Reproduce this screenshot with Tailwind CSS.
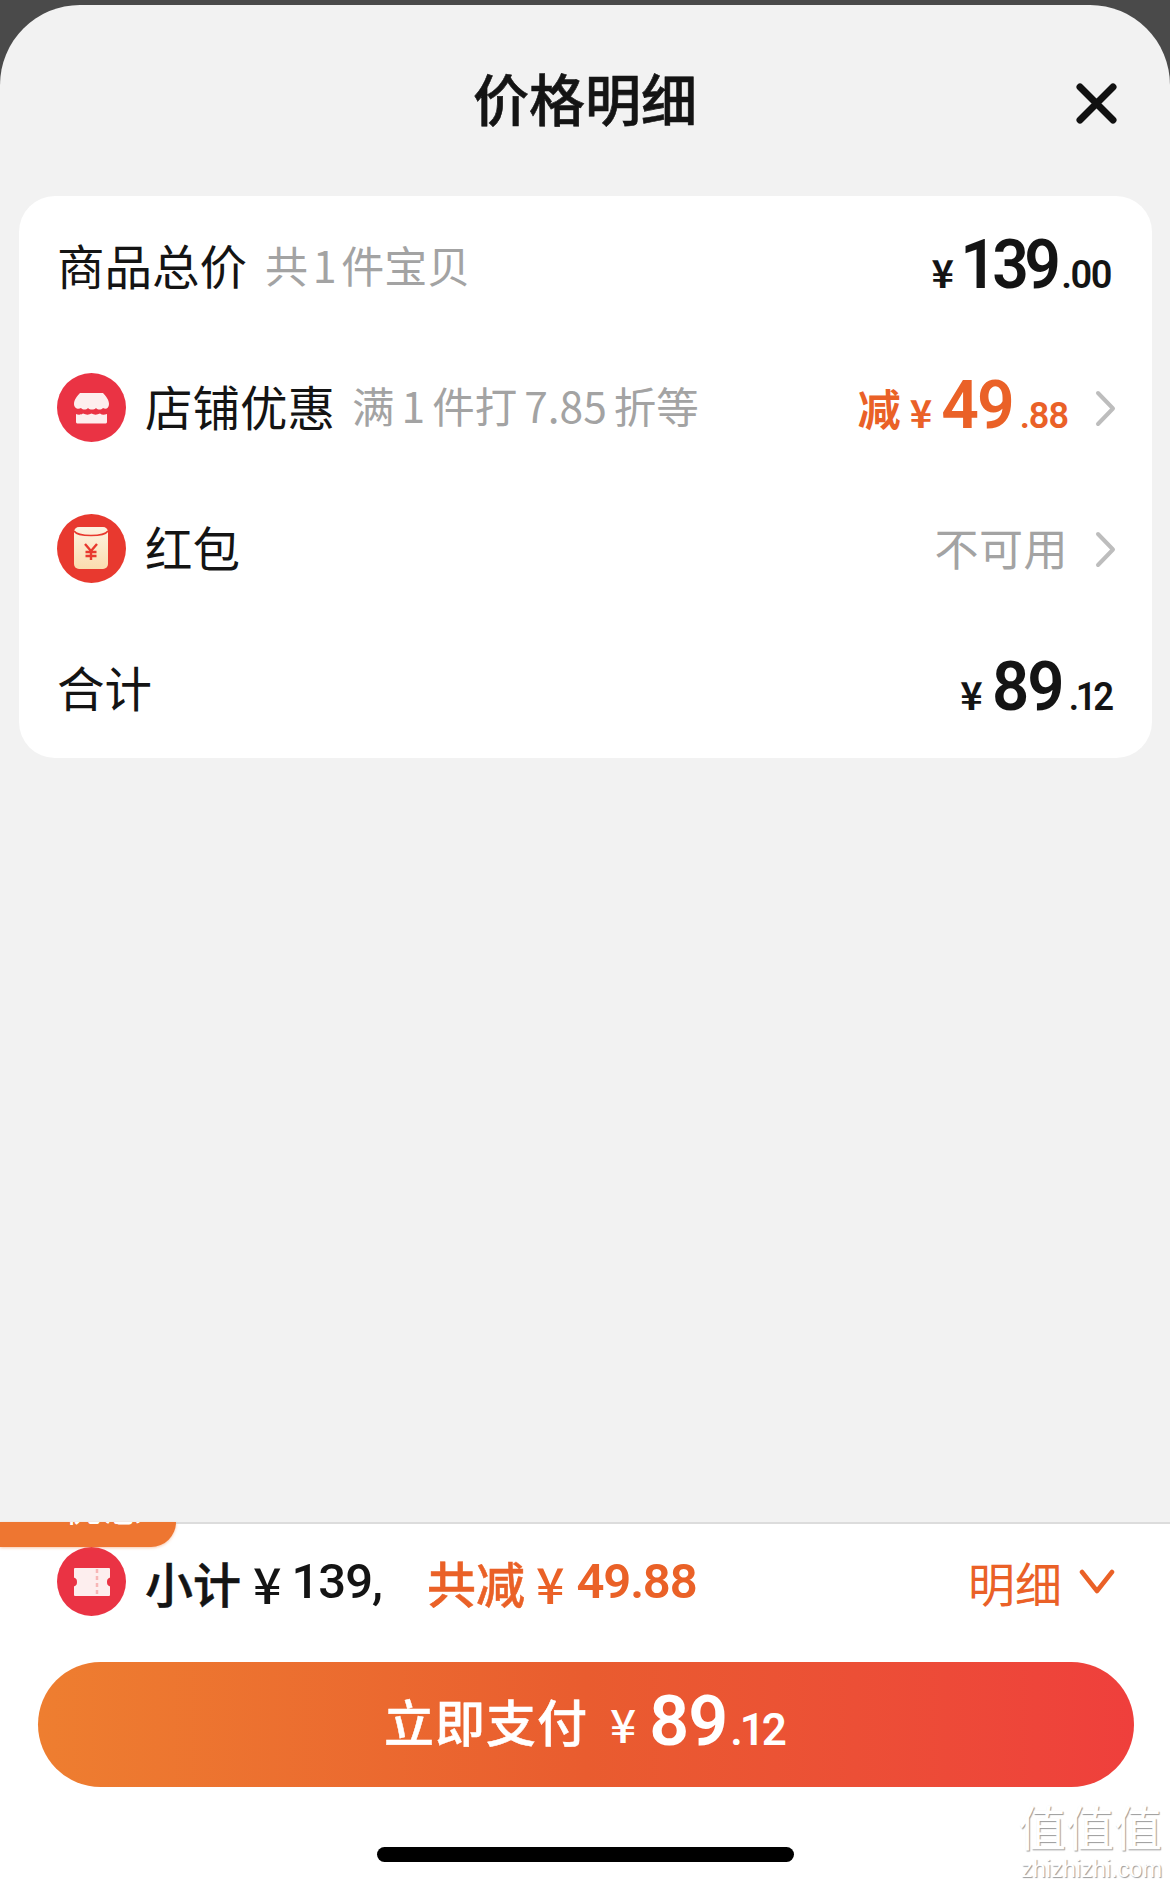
<!doctype html>
<html lang="zh-CN">
  <head>
    <meta charset="UTF-8" />
    <script src="https://cdn.jsdelivr.net/npm/@tailwindcss/browser@4"></script>
    <title>价格明细</title>
  </head>
  <body class="bg-[#4a4a4a] font-['Noto_Sans_CJK_SC','Noto_Sans',sans-serif] text-[#141414]">
    <div class="relative w-[1170px] h-[1886px] pt-[5px] overflow-hidden">
      <div class="h-full flex flex-col bg-[#f2f2f2] rounded-t-[80px]">
        <!-- header -->
        <div class="relative h-[191px] shrink-0 flex justify-center pt-[59px]">
          <h1 class="text-[56px] leading-[66px] font-medium [-webkit-text-stroke:0.6px_#141414]">价格明细</h1>
          <svg class="absolute left-[1076px] top-[78px]" width="41" height="41" viewBox="0 0 41 41" fill="none" stroke="#111" stroke-width="7" stroke-linecap="round">
            <path d="M4 4L37 37M37 4L4 37" />
          </svg>
        </div>

        <!-- price card -->
        <div class="ml-[19px] mr-[18px] bg-white rounded-[36px] h-[562px] shrink-0 flex flex-col pl-[38px] pr-[41px]">
          <div class="h-[141px] flex items-center justify-between">
            <div class="flex items-center -translate-y-[2px]">
              <span class="text-[47.5px] leading-none">商品总价</span>
              <span class="text-[43px] leading-none text-[#a3a3a3] ml-[18px] [word-spacing:-5px]">共 1 件宝贝</span>
            </div>
            <div class="flex items-baseline font-['Roboto',sans-serif] font-semibold">
              <span class="text-[38px] font-['Noto_Sans_CJK_SC'] font-semibold mr-[-1px]">¥</span>
              <span class="text-[69px] leading-none tracking-[-5px] inline-block scale-x-[0.93] origin-right">139</span>
              <span class="text-[38px] ml-[5px] tracking-[-1.5px]">.00</span>
            </div>
          </div>

          <div class="h-[141px] flex items-center justify-between -mr-[5px]">
            <div class="flex items-center">
              <svg width="69" height="69" viewBox="0 0 69 69">
                <circle cx="34.5" cy="34.5" r="34.5" fill="#ea3344" />
                <path d="M23 20H46C49 23 52 27 52 31C52 35 49 37 46 35C44 37 41 37 39 35C37 37 33 37 31 35C29 37 26 37 24 35C21 37 17 35 17 31C17 27 20 23 23 20Z" fill="#fdeeee" />
                <path d="M19 41C21 42 24 42 26 40.5C29 42 32 42 34.5 40.5C37 42 40 42 43 40.5C45 42 47 42 50 41V49C50 50 49 50.5 48 50.5H21C20 50.5 19 50 19 49Z" fill="#fdeeee" />
              </svg>
              <div class="flex items-center -translate-y-[2px]">
                <span class="text-[47.5px] leading-none ml-[19px]">店铺优惠</span>
                <span class="text-[42.5px] leading-none text-[#a3a3a3] ml-[17px] [word-spacing:-2.5px]">满 1 件打 7.85 折等</span>
              </div>
            </div>
            <div class="flex items-center">
              <div class="flex items-baseline text-[#ea6127] font-['Roboto',sans-serif] font-semibold">
                <span class="text-[43px] font-['Noto_Sans_CJK_SC'] font-semibold translate-y-[-2px]">减</span>
                <span class="text-[38px] font-['Noto_Sans_CJK_SC'] font-semibold ml-[9px] mr-[9px]">¥</span>
                <span class="text-[66px] leading-none tracking-[-2px]">49</span>
                <span class="text-[36px] ml-[7px] tracking-[-1px]">.88</span>
              </div>
              <svg class="ml-[27px] mt-[2px]" width="21" height="37" viewBox="0 0 21 37" fill="none" stroke="#bdbdbd" stroke-width="4" stroke-linecap="round" stroke-linejoin="round">
                <path d="M3 3L18 18.5L3 34" />
              </svg>
            </div>
          </div>

          <div class="h-[141px] flex items-center justify-between -mr-[5px]">
            <div class="flex items-center">
              <svg width="69" height="69" viewBox="0 0 69 69">
                <defs>
                  <linearGradient id="pouch" x1="0" y1="0" x2="0" y2="1">
                    <stop offset="0" stop-color="#fdf3e2" />
                    <stop offset="1" stop-color="#fbdcae" />
                  </linearGradient>
                </defs>
                <circle cx="34.5" cy="34.5" r="34.5" fill="#e8392f" />
                <rect x="17" y="13" width="34" height="42" rx="5" fill="url(#pouch)" />
                <path d="M17 17C21 23 47 23 51 17" fill="none" stroke="#e8392f" stroke-width="1.6" />
                <path d="M28 30L34 37L40 30M34 37V46M28.5 38H39.5M28.5 42H39.5" fill="none" stroke="#e8392f" stroke-width="2.4" />
              </svg>
              <span class="text-[47.5px] leading-none ml-[19px] -translate-y-[2px]">红包</span>
            </div>
            <div class="flex items-center">
              <span class="text-[44px] leading-none text-[#a3a3a3] tracking-[0.5px] -translate-y-[2px]">不可用</span>
              <svg class="ml-[27px] mt-[2px]" width="21" height="37" viewBox="0 0 21 37" fill="none" stroke="#bdbdbd" stroke-width="4" stroke-linecap="round" stroke-linejoin="round">
                <path d="M3 3L18 18.5L3 34" />
              </svg>
            </div>
          </div>

          <div class="h-[139px] flex items-center justify-between">
            <span class="text-[47.5px] leading-none -translate-y-[2px]">合计</span>
            <div class="flex items-baseline font-['Roboto',sans-serif] font-semibold translate-y-[1px]">
              <span class="text-[38px] font-['Noto_Sans_CJK_SC'] font-semibold mr-[6px]">¥</span>
              <span class="text-[68px] leading-none tracking-[-2px] inline-block scale-x-[0.96] origin-right">89</span>
              <span class="text-[38px] ml-[5px] tracking-[-3.5px] inline-block scale-x-[0.96] origin-right">.12</span>
            </div>
          </div>
        </div>

        <div class="flex-1"></div>

        <!-- footer -->
        <div class="relative h-[364px] shrink-0 bg-white border-t-2 border-[#dcdcdc] px-[38px]">
          <div class="absolute left-0 -top-[2px] w-[176px] h-[25px] bg-[#ee7631] rounded-br-[28px] shadow-[0_1px_3px_rgba(238,118,49,0.4)] overflow-hidden">
            <span class="absolute left-[64px] -top-[36px] text-[38px] leading-[38px] text-white tracking-[2px]">优惠</span>
          </div>

          <div class="h-[138px] pt-[23px] flex items-start justify-between">
            <div class="flex items-center ml-[19px]">
              <svg width="69" height="69" viewBox="0 0 69 69">
                <circle cx="34.5" cy="34.5" r="34.5" fill="#ea3344" />
                <path d="M18 22H52V30C48 31 48 39 52 40V48H18V40C22 39 22 31 18 30Z" fill="#fdeeee" stroke="#fdeeee" stroke-width="2" stroke-linejoin="round" />
                <path d="M40 22V48" stroke="#f7b6b6" stroke-width="2.5" stroke-dasharray="4 3" />
              </svg>
              <span class="text-[48px] leading-none font-medium ml-[19px] [-webkit-text-stroke:0.5px_#141414]">小计</span>
              <span class="text-[50px] leading-none font-medium ml-[12px]">¥</span>
              <span class="font-['Roboto',sans-serif] font-medium text-[49px] leading-none ml-[10px] tracking-[-1px]">139,</span>
              <span class="text-[49px] leading-none font-medium text-[#ea6127] ml-[45px] [-webkit-text-stroke:0.5px_#ea6127]">共减</span>
              <span class="text-[50px] leading-none font-medium text-[#ea6127] ml-[11px]">¥</span>
              <span class="font-['Roboto',sans-serif] font-semibold text-[49px] leading-none text-[#ea6127] ml-[12px] tracking-[-1.2px]">49.88</span>
            </div>
            <div class="flex items-center h-[69px] mr-[17px]">
              <span class="text-[47px] leading-none text-[#ea6127]">明细</span>
              <svg class="ml-[17px]" width="36" height="26" viewBox="0 0 36 26" fill="none" stroke="#ea6127" stroke-width="4.5" stroke-linecap="round" stroke-linejoin="round">
                <path d="M3 3L18 22L33 3" />
              </svg>
            </div>
          </div>

          <button class="w-[1096px] h-[125px] rounded-full bg-gradient-to-r from-[#ee7e30] via-[#e95c2f] via-50% to-[#ef3f3c] text-white flex items-baseline justify-center pt-[24px] pr-[4px]">
            <span class="text-[50px] leading-none font-medium tracking-[1px] -translate-y-[3px] [-webkit-text-stroke:0.5px_#fff]">立即支付</span>
            <span class="text-[46px] leading-none font-medium ml-[22px] -translate-y-[2px]">¥</span>
            <span class="font-['Roboto',sans-serif] font-semibold text-[70px] leading-none ml-[13px] tracking-[-1px]">89</span>
            <span class="font-['Roboto',sans-serif] font-semibold text-[44px] leading-none ml-[3px] tracking-[-3px]">.12</span>
          </button>

          <div class="w-[417px] h-[15px] rounded-full bg-black mx-auto mt-[60px]"></div>
        </div>
      </div>

      <!-- watermark -->
      <div class="absolute right-[8px] bottom-[3px] flex flex-col items-end text-white [text-shadow:1px_1px_1px_#9a9a9a]">
        <span class="text-[48px] leading-[48px] font-['Noto_Sans_CJK_SC'] tracking-[0px]">值值值</span>
        <span class="text-[23.5px] leading-[28px] mt-[6px] font-['Liberation_Sans',sans-serif]">zhizhizhi.com</span>
      </div>
    </div>
  </body>
</html>
